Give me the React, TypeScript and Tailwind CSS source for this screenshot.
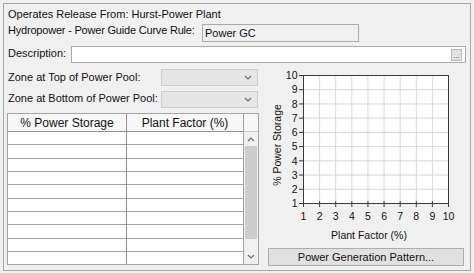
import React from 'react'

const rowHeights = ['h-[13px]', 'h-[14px]', 'h-[13px]', 'h-[13px]', 'h-[14px]', 'h-[13px]', 'h-[13px]', 'h-[14px]', 'h-[13px]', 'h-[12px]']

function Chevron({ up = false }: { up?: boolean }) {
  return (
    <svg width="8" height="5" viewBox="0 0 8 5" className="block">
      <path d={up ? 'M1 4 L4 1 L7 4' : 'M1 1 L4 4 L7 1'} fill="none" stroke="#6d6d6d" strokeWidth="1.2" />
    </svg>
  )
}

function Combo() {
  return (
    <div className="w-[97px] h-[17px] bg-[#e5e5e5] border border-[#cccccc] flex items-center justify-end pr-[5px]">
      <Chevron />
    </div>
  )
}

function Chart() {
  const left = 44
  const right = 189
  const top = 12
  const bottom = 140
  const sx = (right - left) / 9
  const sy = (bottom - top) / 9
  const steps = Array.from({ length: 10 }, (_, i) => i)

  return (
    <svg width="210" height="185" className="block" fontFamily="'Liberation Sans', Arial, sans-serif" fontSize="10.5">
      <rect x={left} y={top} width={right - left} height={bottom - top} fill="#ffffff" />
      {steps.slice(1, 9).map((i) => (
        <line key={'v' + i} x1={left + i * sx + 0.5} x2={left + i * sx + 0.5} y1={top} y2={bottom} stroke="#d6d6d6" />
      ))}
      {steps.slice(1, 9).map((i) => (
        <line key={'h' + i} x1={left} x2={right} y1={top + i * sy + 0.5} y2={top + i * sy + 0.5} stroke="#d6d6d6" />
      ))}
      <rect x={left + 0.5} y={top + 0.5} width={right - left} height={bottom - top} fill="none" stroke="#3a3a3a" />
      {/* y axis ticks + labels */}
      {steps.map((i) => {
        const y = bottom - i * sy + 0.5
        return (
          <g key={'yl' + i}>
            <line x1={left - 4} x2={left} y1={y} y2={y} stroke="#3a3a3a" />
            <text x={left - 5.5} y={y + 3.7} textAnchor="end" fill="#111">
              {i + 1}
            </text>
          </g>
        )
      })}
      {/* x axis ticks + labels */}
      {steps.map((i) => {
        const x = left + i * sx + 0.5
        return (
          <g key={'xl' + i}>
            <line x1={x} x2={x} y1={bottom - 2} y2={bottom + 4} stroke="#3a3a3a" />
            <text x={x} y={157} textAnchor="middle" fill="#111">
              {i + 1}
            </text>
          </g>
        )
      })}
      <text x={110} y={176} textAnchor="middle" fill="#111">
        Plant Factor (%)
      </text>
      <text x={22} y={82} textAnchor="middle" fill="#111" transform="rotate(-90 22 82)">
        % Power Storage
      </text>
    </svg>
  )
}

export default function App() {
  return (
    <div className="w-[474px] h-[273px] bg-[#f0f0f0] pt-[3px] pl-[3px] font-['Liberation_Sans',Arial,sans-serif] text-[11px] text-[#111] leading-[14px] overflow-hidden">
      <div className="w-[468px] h-[268px] border border-[#a8a8a8] flex flex-col">
        {/* header lines */}
        <div className="mt-[3px] pl-[4px] h-[14px]">Operates Release From: Hurst-Power Plant</div>

        <div className="mt-[3px] pl-[4px] h-[18px] flex items-start">
          <span className="-mt-px tracking-[-0.2px]">Hydropower - Power Guide Curve Rule:</span>
          <div className="ml-auto mr-[111px] w-[157px] h-[18px] border border-[#a9a9a9] bg-[#f0f0f0] pl-[2px] leading-[16px]">
            Power GC
          </div>
        </div>

        <div className="mt-[4px] pl-[4px] h-[17px] flex items-start">
          <span>Description:</span>
          <div className="ml-auto mr-[4px] w-[395px] h-[17px] border border-[#a9a9a9] bg-white flex items-center justify-end pr-[3px]">
            <div className="w-[11px] h-[12px] bg-[#e1e1e1] border border-[#b8b8b8] text-[8px] leading-[12px] text-center text-[#555]">
              ...
            </div>
          </div>
        </div>

        <div className="flex">
          {/* left column */}
          <div className="w-[255px] flex flex-col">
            <div className="mt-[6px] pl-[4px] pr-px h-[17px] flex items-start">
              <span className="mt-px">Zone at Top of Power Pool:</span>
              <div className="ml-auto">
                <Combo />
              </div>
            </div>
            <div className="mt-[5px] pl-[4px] pr-px h-[17px] flex items-start">
              <span>Zone at Bottom of Power Pool:</span>
              <div className="ml-auto">
                <Combo />
              </div>
            </div>

            {/* table */}
            <div className="mt-[5px] ml-[3px] w-[252px] border border-[#a5a5a5] bg-white flex">
              <div className="w-[119px] flex flex-col border-r border-[#8f8f8f]">
                <div className="h-[18px] border-b border-[#8f8f8f] bg-[#f7f7f7] flex items-center justify-center text-[12px]">
                  % Power Storage
                </div>
                {rowHeights.map((h, i) => (
                  <div key={i} className={`${h} ${i < 9 ? 'border-b border-[#a0a0a0]' : ''}`} />
                ))}
              </div>
              <div className="w-[117px] flex flex-col border-r border-[#a0a0a0]">
                <div className="h-[18px] border-b border-[#8f8f8f] bg-[#f7f7f7] flex items-center justify-center text-[12px]">
                  Plant Factor (%)
                </div>
                {rowHeights.map((h, i) => (
                  <div key={i} className={`${h} ${i < 9 ? 'border-b border-[#a0a0a0]' : ''}`} />
                ))}
              </div>
              <div className="w-[14px] flex flex-col bg-[#f0f0f0]">
                <div className="h-[18px] border-b border-[#c8c8c8] bg-[#f7f7f7]" />
                <div className="h-[14px] flex items-center justify-center">
                  <Chevron up />
                </div>
                <div className="mx-px h-[93px] bg-[#cdcdcd]" />
                <div className="flex-1 flex items-end justify-center pb-[5px]">
                  <Chevron />
                </div>
              </div>
            </div>
          </div>

          {/* right column */}
          <div className="w-[210px] flex flex-col">
            <Chart />
            <button className="ml-[9px] w-[196px] h-[18px] bg-[#e1e1e1] border border-[#adadad] leading-[16px] text-center text-[#111]">
              Power Generation Pattern...
            </button>
          </div>
        </div>
      </div>
    </div>
  )
}
